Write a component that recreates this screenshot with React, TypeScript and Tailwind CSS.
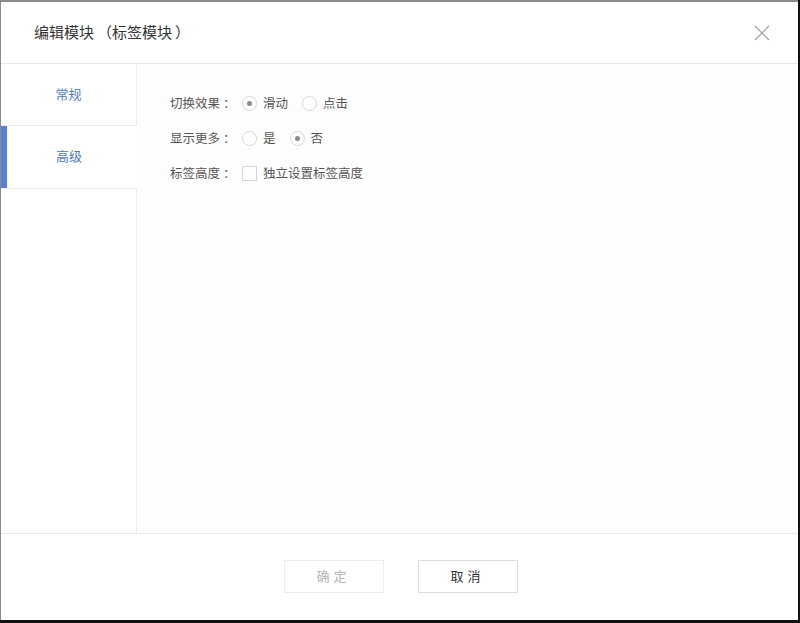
import React, { useState } from "react";

const FONT = { fontFamily: '"Noto Sans CJK SC", "Noto Sans", sans-serif' };

interface RadioProps {
  checked: boolean;
  label: string;
  onClick: () => void;
}

const Radio: React.FC<RadioProps> = ({ checked, label, onClick }) => (
  <button onClick={onClick} className="flex items-center gap-[6px] text-[12.5px] text-[#555]">
    <span className="flex h-[15px] w-[15px] items-center justify-center rounded-full border border-[#d6d6d6] bg-white">
      {checked && <span className="h-[5px] w-[5px] rounded-full bg-[#8a8a8a]" />}
    </span>
    {label}
  </button>
);

const TABS = ["常规", "高级"];

export default function App() {
  const [tab, setTab] = useState("高级");
  const [effect, setEffect] = useState("滑动");
  const [more, setMore] = useState("否");
  const [custom, setCustom] = useState(false);

  return (
    <div lang="zh-CN" style={FONT} className="h-[623px] w-[800px] bg-[#111]">
      <div className="flex h-[620px] w-[798px] flex-col border-l border-t-2 border-[#8a8a8a] bg-white">
        {/* Header */}
        <div className="flex h-[62px] shrink-0 items-center justify-between border-b border-[#e8e8e8] pl-[33px] pr-[28px]">
          <h2 className="text-[15px] text-[#333]">
            编辑模块<span className="pl-[3px]">（</span>标签模块<span className="pl-[3px]">）</span>
          </h2>
          <button className="text-[#999]">
            <svg width="16" height="16" viewBox="0 0 16 16" fill="none" stroke="currentColor" strokeWidth="1.1">
              <path d="M1 1 L15 15 M15 1 L1 15" />
            </svg>
          </button>
        </div>

        {/* Body */}
        <div className="flex flex-1">
          <div className="flex w-[136px] shrink-0 flex-col">
            {TABS.map((t) => (
              <button
                key={t}
                onClick={() => setTab(t)}
                className={`flex h-[62px] items-center justify-center pb-[2px] text-[13px] text-[#4f7bc4] ${
                  tab === t
                    ? "border-l-[6px] border-[#5b7fd6] bg-white pr-[6px]"
                    : "border-b border-r border-[#ececec] bg-white"
                }`}
              >
                {t}
              </button>
            ))}
            <div className="flex-1 border-r border-t border-[#ececec]" />
          </div>

          <div className="flex flex-1 flex-col gap-[16px] bg-[#fdfdfd] pl-[33px] pt-[30px]">
            <div className="flex h-[19px] items-center text-[12.5px] text-[#555]">
              <span className="w-[72px]">切换效果<span className="pl-[3px]">：</span></span>
              <div className="flex items-center gap-[14px]">
                <Radio checked={effect === "滑动"} label="滑动" onClick={() => setEffect("滑动")} />
                <Radio checked={effect === "点击"} label="点击" onClick={() => setEffect("点击")} />
              </div>
            </div>
            <div className="flex h-[19px] items-center text-[12.5px] text-[#555]">
              <span className="w-[72px]">显示更多<span className="pl-[3px]">：</span></span>
              <div className="flex items-center gap-[14px]">
                <Radio checked={more === "是"} label="是" onClick={() => setMore("是")} />
                <Radio checked={more === "否"} label="否" onClick={() => setMore("否")} />
              </div>
            </div>
            <div className="flex h-[19px] items-center text-[12.5px] text-[#555]">
              <span className="w-[72px]">标签高度<span className="pl-[3px]">：</span></span>
              <button onClick={() => setCustom(!custom)} className="flex items-center gap-[6px] text-[#555]">
                <span className="flex h-[15px] w-[15px] items-center justify-center border border-[#d6d6d6] bg-white text-[10px] leading-none">
                  {custom ? "✓" : ""}
                </span>
                独立设置标签高度
              </button>
            </div>
          </div>
        </div>

        {/* Footer */}
        <div className="flex h-[87px] shrink-0 items-center justify-center gap-[34px] border-t border-[#e8e8e8] pb-[2px]">
          <button
            disabled
            className="ml-[2px] h-[33px] w-[100px] border border-[#eeeeee] bg-white text-[13px] tracking-[4px] text-[#b5b5b5]"
          >
            确定
          </button>
          <button className="h-[33px] w-[100px] border border-[#dddddd] bg-white text-[13px] tracking-[4px] text-[#333]">
            取消
          </button>
        </div>
      </div>
    </div>
  );
}
